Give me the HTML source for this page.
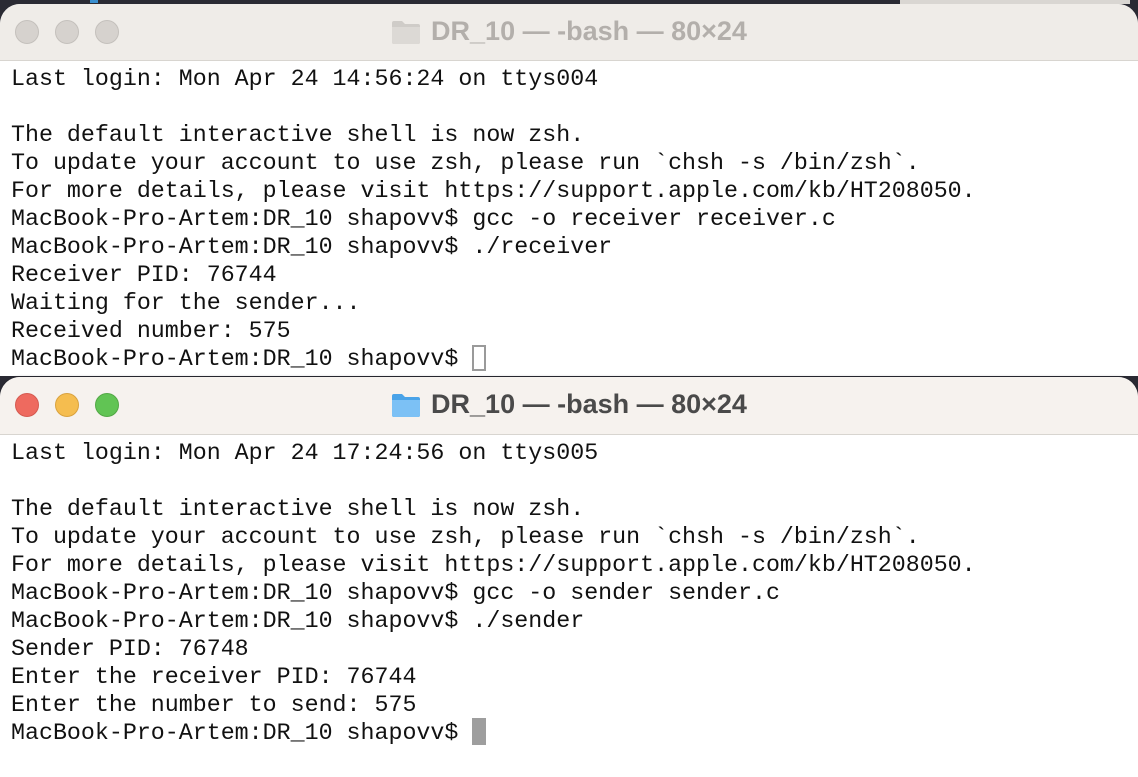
<!DOCTYPE html>
<html><head><meta charset="utf-8"><style>
html,body{margin:0;padding:0}
body{width:1138px;height:764px;position:relative;overflow:hidden;background:#2a2a33;font-family:"Liberation Mono",monospace}
.win{position:absolute;left:0;width:1138px;background:#fff;border-radius:20px 20px 0 0;overflow:hidden}
.tb{position:absolute;left:0;top:0;width:100%;border-bottom:1px solid #d8d5d0}
.dot{position:absolute;width:24px;height:24px;border-radius:50%;box-sizing:border-box}
.title{position:absolute;left:0;width:100%;text-align:center;font-family:"Liberation Sans",sans-serif;font-weight:bold;font-size:27px}
.title svg{vertical-align:-5px;margin-right:10px}
.txt{position:absolute;left:11px;font-size:23.3px;line-height:28px;color:#111;white-space:pre}
</style></head><body>
<div style="position:absolute;left:90px;top:0;width:8px;height:3px;background:#3a8fd0"></div>
<div style="position:absolute;left:900px;top:0;width:230px;height:4px;background:#d9d6d2"></div>

<div class="win" style="top:4px;height:372px">
  <div class="tb" style="height:56px;background:#efece8">
    <div class="dot" style="left:15px;top:16px;background:#d6d2ce;border:1px solid #c4c0bc"></div>
    <div class="dot" style="left:55px;top:16px;background:#d6d2ce;border:1px solid #c4c0bc"></div>
    <div class="dot" style="left:95px;top:16px;background:#d6d2ce;border:1px solid #c4c0bc"></div>
    <div class="title" style="top:12px;color:#b3afab"><svg width="30" height="26" viewBox="0 0 30 26"><path d="M1 4a2 2 0 0 1 2-2h8l3 3h13a2 2 0 0 1 2 2v16a2 2 0 0 1-2 2H3a2 2 0 0 1-2-2z" fill="#cfccc8"/><path d="M1 8h28v15a2 2 0 0 1-2 2H3a2 2 0 0 1-2-2z" fill="#dcd9d5"/></svg>DR_10 — -bash — 80×24</div>
  </div>
  <div class="txt" style="top:61px">Last login: Mon Apr 24 14:56:24 on ttys004

The default interactive shell is now zsh.
To update your account to use zsh, please run `chsh -s /bin/zsh`.
For more details, please visit https://support.apple.com/kb/HT208050.
MacBook-Pro-Artem:DR_10 shapovv$ gcc -o receiver receiver.c
MacBook-Pro-Artem:DR_10 shapovv$ ./receiver
Receiver PID: 76744
Waiting for the sender...
Received number: 575
MacBook-Pro-Artem:DR_10 shapovv$ </div>
  <div style="position:absolute;left:472px;top:341px;width:14px;height:26px;box-sizing:border-box;border:2px solid #9a9a9a"></div>
</div>

<div class="win" style="top:377px;height:400px;box-shadow:0 -1px 2px rgba(0,0,0,.15)">
  <div class="tb" style="height:57px;background:#f6f2ee">
    <div class="dot" style="left:15px;top:16px;background:#ee6a5f;border:1px solid #d55a50"></div>
    <div class="dot" style="left:55px;top:16px;background:#f5bd4f;border:1px solid #d9a23e"></div>
    <div class="dot" style="left:95px;top:16px;background:#61c454;border:1px solid #52a845"></div>
    <div class="title" style="top:12px;color:#4a4a4a"><svg width="30" height="26" viewBox="0 0 30 26"><path d="M1 4a2 2 0 0 1 2-2h8l3 3h13a2 2 0 0 1 2 2v16a2 2 0 0 1-2 2H3a2 2 0 0 1-2-2z" fill="#4aa3e8"/><path d="M1 8h28v15a2 2 0 0 1-2 2H3a2 2 0 0 1-2-2z" fill="#7cc1f5"/></svg>DR_10 — -bash — 80×24</div>
  </div>
  <div class="txt" style="top:62px">Last login: Mon Apr 24 17:24:56 on ttys005

The default interactive shell is now zsh.
To update your account to use zsh, please run `chsh -s /bin/zsh`.
For more details, please visit https://support.apple.com/kb/HT208050.
MacBook-Pro-Artem:DR_10 shapovv$ gcc -o sender sender.c
MacBook-Pro-Artem:DR_10 shapovv$ ./sender
Sender PID: 76748
Enter the receiver PID: 76744
Enter the number to send: 575
MacBook-Pro-Artem:DR_10 shapovv$ </div>
  <div style="position:absolute;left:472px;top:341px;width:14px;height:27px;background:#9e9e9e"></div>
</div>
</body></html>
